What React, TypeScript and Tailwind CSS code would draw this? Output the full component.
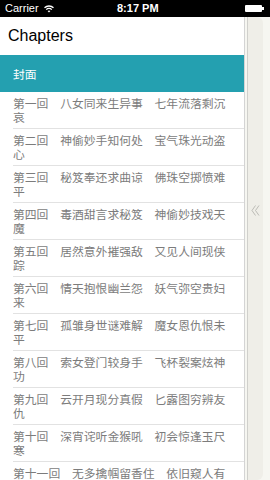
import React from "react";

const rows = [
  "第一回　八女同来生异事　七年流落剩沉哀",
  "第二回　神偷妙手知何处　宝气珠光动盗心",
  "第三回　秘笈奉还求曲谅　佛珠空掷愤难平",
  "第四回　毒酒甜言求秘笈　神偷妙技戏天魔",
  "第五回　居然意外摧强敌　又见人间现侠踪",
  "第六回　情天抱恨幽兰怨　妖气弥空贵妇来",
  "第七回　孤雏身世谜难解　魔女恩仇恨未平",
  "第八回　索女登门较身手　飞杯裂案炫神功",
  "第九回　云开月现分真假　匕露图穷辨友仇",
  "第十回　深宵诧听金猴吼　初会惊逢玉尺寒",
  "第十一回　无多擒帼留香住　依旧窥人有异心",
];

const cjk = { fontFamily: '"Noto Sans CJK SC", "Noto Sans", sans-serif' };
const sans = { fontFamily: '"Liberation Sans", Arial, sans-serif' };

export default function App() {
  return (
    <div className="w-[270px] h-[480px] overflow-hidden flex flex-col bg-[#f6f6f1]">
      {/* status bar */}
      <div className="h-[17px] bg-black flex items-center px-[5px] relative shrink-0" style={sans}>
        <span className="text-white text-[11px] leading-none">Carrier</span>
        <svg className="ml-[5px]" width="10" height="8" viewBox="0 0 10 8">
          <path d="M0.5 2.8 A6.5 6.5 0 0 1 9.5 2.8" stroke="white" strokeWidth="1.3" fill="none" />
          <path d="M2.2 4.6 A4 4 0 0 1 7.8 4.6" stroke="white" strokeWidth="1.3" fill="none" />
          <path d="M5 7.6 L3.6 6.1 A2 2 0 0 1 6.4 6.1 Z" fill="white" />
        </svg>
        <span className="absolute left-[117px] text-white text-[11px] font-bold leading-none">8:17 PM</span>
        <div className="absolute left-[245px] top-[5px] flex items-center">
          <div className="w-[17px] h-[7px] bg-white rounded-[1px]" />
          <div className="w-[2px] h-[3px] bg-white" />
        </div>
      </div>
      <div className="flex flex-1 min-h-0">
        {/* panel */}
        <div className="w-[245px] bg-white border-r border-[#d4d4d4] flex flex-col overflow-hidden shrink-0">
          <div className="h-[38px] flex items-center pl-[8px] shrink-0" style={sans}>
            <span className="text-[16px] text-black">Chapters</span>
          </div>
          <div className="h-[37px] bg-[#24a0b0] flex items-center pl-[13px] shrink-0" style={cjk}>
            <span className="text-white text-[11.8px]">封面</span>
          </div>
          {rows.map((r, i) => (
            <div key={i} className="pl-[13px] shrink-0">
              <div className="h-[37px] border-b border-[#e2e2e2] pr-[12px] pt-[4px] overflow-hidden">
                <p className="text-[11.8px] leading-[14px] text-[#7c7c7c]" style={cjk}>
                  {r}
                </p>
              </div>
            </div>
          ))}
        </div>
        {/* side tab */}
        <div className="w-[16px] ml-[2px] bg-[#efeee8] border-l border-[#d0d0cc] rounded-r-[6px] flex flex-col items-center">
          <svg className="mt-[188px] mr-[1px]" width="9" height="11" viewBox="0 0 9 11">
            <path d="M4.5 0.5 L1 5.5 L4.5 10.5" stroke="#b5b5b0" strokeWidth="0.9" fill="none" />
            <path d="M8 0.5 L4.5 5.5 L8 10.5" stroke="#b5b5b0" strokeWidth="0.9" fill="none" />
          </svg>
        </div>
      </div>
    </div>
  );
}
